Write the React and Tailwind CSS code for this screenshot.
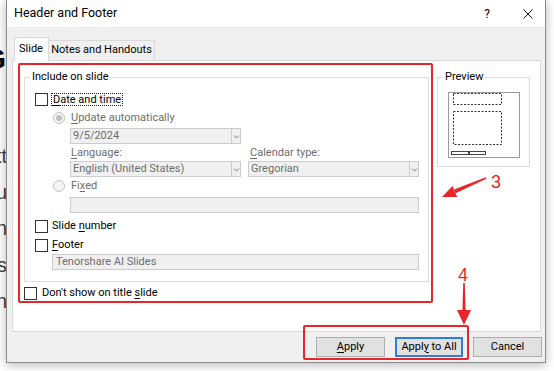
import React from "react";

function U({ children }) {
  return <span className="underline underline-offset-[2px] decoration-[1px]">{children}</span>;
}

function Chk() {
  return <span className="block h-[13px] w-[13px] shrink-0 border border-[#333333] bg-white" />;
}

function Radio({ on }) {
  return (
    <span className="flex h-[12px] w-[12px] shrink-0 items-center justify-center rounded-full border border-[#c2c2c2] bg-[#f4f4f4]">
      {on && <span className="block h-[6px] w-[6px] rounded-full bg-[#bdbdbd]" />}
    </span>
  );
}

function Chevron() {
  return (
    <svg width="7" height="5" viewBox="0 0 7 5">
      <path d="M1 1.5 L3.5 4 L6 1.5" fill="none" stroke="#7a7a7a" strokeWidth="1" />
    </svg>
  );
}

function Select({ className, text }) {
  return (
    <div className={"flex h-[16px] border border-[#cccccc] bg-[#f0f0f0] " + className}>
      <span className="flex-1 overflow-hidden whitespace-nowrap pl-[2px] leading-[14px] text-[#6d6d6d]">{text}</span>
      <span className="flex w-[9px] items-center justify-center border-l border-[#cccccc]">
        <Chevron />
      </span>
    </div>
  );
}

function Btn({ className, children }) {
  return (
    <div className={"flex h-[20px] items-center justify-center bg-[#e1e1e1] " + className}>{children}</div>
  );
}

export default function App() {
  return (
    <div className="relative h-[371px] w-[554px] overflow-hidden bg-white text-[11px] text-black [font-family:Roboto,'Noto_Sans',sans-serif]">
      {/* slide content behind the dialog */}
      <div className="absolute left-0 top-0 h-full w-[10px] [font-family:'Liberation_Sans',sans-serif]">
        <span className="absolute right-[4px] top-[44px] whitespace-nowrap text-[30px] font-bold leading-none text-black">G</span>
        <span className="absolute right-[3px] top-[146px] whitespace-nowrap text-[20px] leading-none text-[#404040]">tt</span>
        <span className="absolute right-[3px] top-[182px] whitespace-nowrap text-[20px] leading-none text-[#404040]">u</span>
        <span className="absolute right-[3px] top-[218px] whitespace-nowrap text-[20px] leading-none text-[#404040]">n</span>
        <span className="absolute right-[3px] top-[255px] whitespace-nowrap text-[20px] leading-none text-[#404040]">s</span>
        <span className="absolute right-[3px] top-[291px] whitespace-nowrap text-[20px] leading-none text-[#404040]">n</span>
      </div>

      {/* dialog window */}
      <div className="absolute left-[6px] top-[-1px] flex h-[364px] w-[540px] flex-col border border-[#8a8a8a] bg-[#f0f0f0] shadow-[0_2px_10px_rgba(0,0,0,0.28)]">
        <div className="flex h-[27px] shrink-0 items-center bg-white pl-[7px] pr-[12px]">
          <span className="text-[12.5px] leading-none">Header and Footer</span>
          <span className="ml-auto text-[12px] leading-none">?</span>
          <svg className="ml-[33px]" width="10" height="10" viewBox="0 0 10 10">
            <path d="M0.5 0.5 L9.5 9.5 M9.5 0.5 L0.5 9.5" stroke="#111" strokeWidth="1" />
          </svg>
        </div>

        {/* tabs */}
        <div className="mt-[10px] flex h-[23px] shrink-0 items-end pl-[7px]">
          <div className="relative z-10 -mb-px flex h-[24px] w-[35px] items-center border border-b-0 border-[#d9d9d9] bg-white pl-[4px]">
            Slide
          </div>
          <div className="flex h-[20px] w-[106px] items-center justify-center border border-b-0 border-l-0 border-[#d9d9d9] bg-[#f0f0f0]">
            Notes and Handouts
          </div>
        </div>

        {/* panel */}
        <div className="ml-[5px] flex h-[272px] w-[529px] shrink-0 flex-col border border-[#d9d9d9] bg-white pl-[11px] pt-[16px]">
          <div className="flex items-start gap-[8px]">
            {/* Include on slide */}
            <div className="relative flex w-[405px] shrink-0 flex-col border border-[#dcdcdc] pb-[11px] pl-[10px]">
              <span className="absolute left-[5px] top-[-9px] bg-white px-[2px] leading-[16px]">Include on slide</span>

              <div className="mt-[15px] flex h-[13px] items-center">
                <Chk />
                <span className="ml-[3px] border border-dotted border-[#222] px-[1px] leading-[11px]">
                  <U>D</U>ate and time
                </span>
              </div>

              <div className="ml-[18px] mt-[6px] flex h-[12px] items-center">
                <Radio on />
                <span className="ml-[6px] text-[#6d6d6d]">
                  <U>U</U>pdate automatically
                </span>
              </div>

              <Select className="ml-[35px] mt-[4px] w-[171px]" text="9/5/2024" />

              <div className="ml-[36px] mt-[2px] flex h-[14px] items-center text-[#6d6d6d]">
                <span className="w-[179px]">
                  <U>L</U>anguage:
                </span>
                <span>
                  <U>C</U>alendar type:
                </span>
              </div>

              <div className="ml-[35px] mt-[1px] flex gap-[7px]">
                <Select className="w-[171px]" text="English (United States)" />
                <Select className="w-[171px]" text="Gregorian" />
              </div>

              <div className="ml-[18px] mt-[3px] flex h-[12px] items-center">
                <Radio />
                <span className="ml-[6px] text-[#6d6d6d]">
                  Fi<U>x</U>ed
                </span>
              </div>

              <div className="ml-[35px] mt-[5px] h-[16px] w-[349px] border border-[#cccccc] bg-[#f0f0f0]" />

              <div className="mt-[7px] flex h-[13px] items-center">
                <Chk />
                <span className="ml-[4px]">
                  Slide <U>n</U>umber
                </span>
              </div>

              <div className="mt-[6px] flex h-[13px] items-center">
                <Chk />
                <span className="ml-[4px]">
                  <U>F</U>ooter
                </span>
              </div>

              <div className="ml-[17px] mt-[2px] flex h-[16px] w-[367px] items-center border border-[#cccccc] bg-[#f0f0f0] pl-[3px] text-[#6d6d6d]">
                Tenorshare AI Slides
              </div>
            </div>

            {/* Preview */}
            <div className="relative h-[90px] w-[93px] shrink-0 border border-[#dcdcdc]">
              <span className="absolute left-[5px] top-[-9px] bg-white px-[2px] leading-[16px]">Preview</span>
              <svg className="ml-[10px] mt-[14px] block" width="72" height="66" viewBox="0 0 72 66">
                <rect x="0.5" y="0.5" width="71" height="65" fill="#fff" stroke="#9a9a9a" />
                <rect x="5.5" y="1.5" width="48" height="11" fill="none" stroke="#333" strokeDasharray="2 1.5" />
                <rect x="5.5" y="19.5" width="48" height="33" fill="none" stroke="#333" strokeDasharray="2 1.5" />
                <rect x="3.5" y="59.5" width="17" height="3" fill="none" stroke="#444" />
                <rect x="21.5" y="59.5" width="16" height="3" fill="none" stroke="#444" />
              </svg>
            </div>
          </div>

          <div className="mt-[5px] flex h-[13px] items-center">
            <Chk />
            <span className="ml-[5px]">
              Don't show on title <U>s</U>lide
            </span>
          </div>
        </div>

        {/* buttons */}
        <div className="mt-[5px] flex justify-end gap-[10px] pr-[3px]">
          <Btn className="w-[69px] border border-[#adadad]">
            <span>
              <U>A</U>pply
            </span>
          </Btn>
          <Btn className="w-[68px] border-2 border-[#2b7fd6]">
            <span>
              Appl<U>y</U> to All
            </span>
          </Btn>
          <Btn className="w-[69px] border border-[#adadad]">Cancel</Btn>
        </div>
      </div>

      {/* red annotations */}
      <div className="absolute left-[18px] top-[63px] h-[240px] w-[415px] rounded-[2px] border-[2.5px] border-[#e8262a]" />
      <div className="absolute left-[303px] top-[325px] h-[35px] w-[166px] rounded-[2px] border-[2.5px] border-[#e8262a]" />
      <span className="absolute left-[491px] top-[173px] text-[18px] leading-none text-[#e8262a] [font-family:'Liberation_Sans',sans-serif]">3</span>
      <span className="absolute left-[458px] top-[266px] text-[18px] leading-none text-[#e8262a] [font-family:'Liberation_Sans',sans-serif]">4</span>
      <svg className="pointer-events-none absolute left-0 top-0" width="554" height="371" viewBox="0 0 554 371">
        <polygon points="486.3,178.8 485.7,177.2 454.1,189.6 455.6,193.3" fill="#e8262a" />
        <polygon points="442,197 452.5,185.9 457.2,197" fill="#e8262a" />
        <polygon points="463.2,283 464.8,283 465.6,311 462.4,311" fill="#e8262a" />
        <polygon points="457,310 471,310 464,325" fill="#e8262a" />
      </svg>
    </div>
  );
}
